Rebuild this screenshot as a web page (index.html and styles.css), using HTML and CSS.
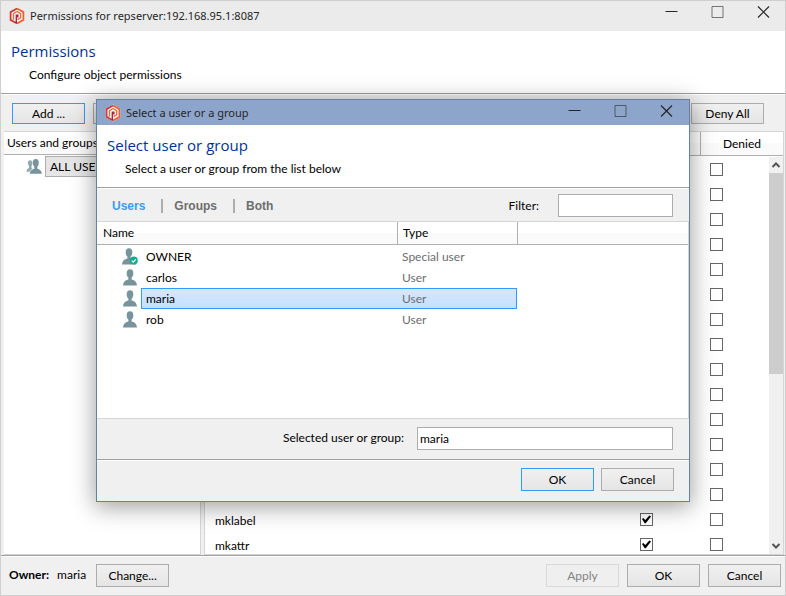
FILE: index.html
```html
<!DOCTYPE html>
<html lang="en">
<head>
<meta charset="utf-8">
<title>Permissions</title>
<meta name="viewport" content="width=device-width">
<link rel="stylesheet" href="styles.css">
</head>
<body>
<svg class="sprite" aria-hidden="true">
  <symbol id="logo" viewBox="0 0 16 18">
    <path d="M8 .6 15.300 4.600V13.400L8 17.400.7 13.400V4.600Z" fill="#fff"/>
    <path d="M8 1.500 14.400 5.100V12.900L8 16.500" fill="none" stroke="#f0602c" stroke-width="1.800"/>
    <path d="M8 1.500 1.600 5.100V12.900L8 16.500" fill="none" stroke="#cc3a3a" stroke-width="1.800"/>
    <path d="M4.500 12.800V6.600L8 4.500l3.600 2.100v4.200L8.600 12.600" fill="none" stroke="#ee6a3c" stroke-width="1.400"/>
    <path d="M7.300 16V8.200h1.600v1.700H7.300" fill="none" stroke="#a82440" stroke-width="1.400"/>
  </symbol>
  <symbol id="person" viewBox="0 0 16 17">
    <ellipse cx="8" cy="4.500" rx="3.300" ry="4.200"/>
    <path d="M6.400 7.500h3.200v3c3.500.8 5.100 2.400 5.400 6H1c.3-3.600 1.900-5.200 5.400-6z"/>
  </symbol>
  <symbol id="people" viewBox="0 0 17 17">
    <ellipse cx="4.400" cy="4.900" rx="2.400" ry="3" opacity=".8"/>
    <path d="M3.200 7h2.600v2.500l1 1-3.200 3.500H.600c.1-2.500 1-3.500 2.600-4z" opacity=".8"/>
    <ellipse cx="10.400" cy="4.600" rx="3.200" ry="4.200"/>
    <path d="M8.800 7.500h3.300v3.300c3.200.8 4.400 2.400 4.700 5.500H4c.3-3.100 1.700-4.700 4.800-5.500z"/>
  </symbol>
  <symbol id="min" viewBox="0 0 12 12"><path d="M0 5.500h12" stroke="currentColor"/></symbol>
  <symbol id="max" viewBox="0 0 12 12"><path d="M.5.5h11v11H.5z" fill="none" stroke="currentColor" opacity=".6"/></symbol>
  <symbol id="close" viewBox="0 0 12 12"><path d="M.5.5l11 11M11.500.500l-11 11" stroke="currentColor" stroke-width="1.200"/></symbol>
</svg>

<main class="window">
  <header class="titlebar">
    <svg class="logo"><use href="#logo"/></svg>
    <span class="caption">Permissions for repserver:192.168.95.1:8087</span>
    <div class="controls">
      <button aria-label="Minimize"><svg><use href="#min"/></svg></button>
      <button aria-label="Maximize"><svg><use href="#max"/></svg></button>
      <button aria-label="Close"><svg><use href="#close"/></svg></button>
    </div>
  </header>
  <section class="intro">
    <h1>Permissions</h1>
    <p>Configure object permissions</p>
  </section>
  <div class="toolbar">
    <button class="btn default">Add ...</button>
    <button class="btn" aria-label="Remove"></button>
    <button class="btn last">Deny All</button>
  </div>
  <div class="panels">
    <section class="panel">
      <h2 class="colhead">Users and groups</h2>
      <ul class="tree">
        <li><svg class="person"><use href="#people"/></svg><span>ALL USERS</span></li>
      </ul>
    </section>
    <section class="panel permissions">
      <table class="perm-table">
        <colgroup><col><col class="c-allowed"><col class="c-denied"></colgroup>
        <thead><tr><th></th><th></th><th>Denied</th></tr></thead>
        <tbody>
          <tr><td></td><td></td><td><input type="checkbox" aria-label="Denied"></td></tr>
          <tr><td></td><td></td><td><input type="checkbox" aria-label="Denied"></td></tr>
          <tr><td></td><td></td><td><input type="checkbox" aria-label="Denied"></td></tr>
          <tr><td></td><td></td><td><input type="checkbox" aria-label="Denied"></td></tr>
          <tr><td></td><td></td><td><input type="checkbox" aria-label="Denied"></td></tr>
          <tr><td></td><td></td><td><input type="checkbox" aria-label="Denied"></td></tr>
          <tr><td></td><td></td><td><input type="checkbox" aria-label="Denied"></td></tr>
          <tr><td></td><td></td><td><input type="checkbox" aria-label="Denied"></td></tr>
          <tr><td></td><td></td><td><input type="checkbox" aria-label="Denied"></td></tr>
          <tr><td></td><td></td><td><input type="checkbox" aria-label="Denied"></td></tr>
          <tr><td></td><td></td><td><input type="checkbox" aria-label="Denied"></td></tr>
          <tr><td></td><td></td><td><input type="checkbox" aria-label="Denied"></td></tr>
          <tr><td></td><td></td><td><input type="checkbox" aria-label="Denied"></td></tr>
          <tr><td>mktoplevelbranch</td><td></td><td><input type="checkbox" aria-label="Denied"></td></tr>
          <tr><td>mklabel</td><td><input type="checkbox" checked aria-label="Allow mklabel"></td><td><input type="checkbox" aria-label="Deny mklabel"></td></tr>
          <tr><td>mkattr</td><td><input type="checkbox" checked aria-label="Allow mkattr"></td><td><input type="checkbox" aria-label="Deny mkattr"></td></tr>
        </tbody>
      </table>
      <div class="scrollbar" aria-hidden="true">
        <svg viewBox="0 0 14 16"><path d="M3.500 10 7 6.500 10.500 10" /></svg>
        <div class="track"><div class="thumb"></div></div>
        <svg viewBox="0 0 14 16"><path d="M3.500 6 7 9.500 10.500 6" /></svg>
      </div>
    </section>
  </div>
  <footer class="footer">
    <strong>Owner:</strong><span class="owner">maria</span>
    <button class="btn tall">Change...</button>
    <button class="btn tall last" disabled>Apply</button>
    <button class="btn tall">OK</button>
    <button class="btn tall">Cancel</button>
  </footer>
</main>

<section class="dialog" role="dialog" aria-labelledby="dialog-title">
  <header class="titlebar">
    <svg class="logo"><use href="#logo"/></svg>
    <span class="caption">Select a user or a group</span>
    <div class="controls">
      <button aria-label="Minimize"><svg><use href="#min"/></svg></button>
      <button aria-label="Maximize"><svg><use href="#max"/></svg></button>
      <button aria-label="Close"><svg><use href="#close"/></svg></button>
    </div>
  </header>
  <section class="intro">
    <h1 id="dialog-title">Select user or group</h1>
    <p>Select a user or group from the list below</p>
  </section>
  <div class="filterbar">
    <nav class="tabs">
      <a href="#users" class="active">Users</a>
      <a href="#groups">Groups</a>
      <a href="#both">Both</a>
    </nav>
    <label for="filter">Filter:</label>
    <input class="field" type="text" id="filter">
  </div>
  <div class="listbox">
    <table class="user-table">
      <colgroup><col class="c-icon"><col class="c-name"><col class="c-type"><col></colgroup>
      <thead><tr><th colspan="2">Name</th><th>Type</th><th></th></tr></thead>
      <tbody>
        <tr>
          <td><svg class="person" viewBox="0 0 16 17"><use href="#person" x="-1" width="16" height="17"/><circle cx="11.800" cy="12.500" r="4" fill="#12b08a"/><path d="M9.800 12.600l1.500 1.500 2.600-2.800" fill="none" stroke="#fff" stroke-width="1.200"/></svg></td>
          <td>OWNER</td><td>Special user</td><td></td>
        </tr>
        <tr><td><svg class="person"><use href="#person"/></svg></td><td>carlos</td><td>User</td><td></td></tr>
        <tr class="selected"><td><svg class="person"><use href="#person"/></svg></td><td>maria</td><td>User</td><td></td></tr>
        <tr><td><svg class="person"><use href="#person"/></svg></td><td>rob</td><td>User</td><td></td></tr>
      </tbody>
    </table>
  </div>
  <div class="selection">
    <label for="selected">Selected user or group:</label>
    <input class="field" type="text" id="selected" value="maria">
  </div>
  <footer class="footer">
    <button class="btn tall default last">OK</button>
    <button class="btn tall">Cancel</button>
  </footer>
</section>
</body>
</html>
```
FILE: styles.css
```css
* { box-sizing: border-box; }
body {
  margin: 0;
  font: 12px/16px Lato, "Open Sans", sans-serif;
  color: #000;
  background: #f0f0f0;
}
h1, h2, p, ul { margin: 0; padding: 0; }
button, input { font: inherit; color: inherit; }
.sprite { position: absolute; width: 0; height: 0; }

.window {
  display: flex;
  flex-direction: column;
  height: 100vh;
  border: 1px solid #cfcfcf;
  background: #f0f0f0;
}

.titlebar {
  display: flex;
  flex: none;
  align-items: center;
  height: 30px;
  padding-left: 8px;
  background: #ebebeb;
  color: #262626;
}
.caption { font-family: "Noto Sans", sans-serif; font-size: 11px; }
.logo { width: 16px; height: 18px; margin-right: 5px; }
.controls { display: flex; gap: 33px; margin-left: auto; padding-right: 15px; }
.controls button { padding: 0; border: 0; background: none; }
.controls svg { display: block; width: 13px; height: 12px; }
.window > .titlebar .controls { padding-bottom: 8px; }

.intro {
  flex: none;
  padding: 9px 10px 8px;
  background: #fff;
  border-bottom: 1px solid #a0a0a0;
}
.intro h1 {
  font: 15px/22px "Open Sans", "Noto Sans", sans-serif;
  color: #003399;
}
.intro p { padding: 3px 0 0 18px; line-height: 20px; }

.toolbar {
  display: flex;
  flex: none;
  gap: 8px;
  padding: 8px 21px 7px 11px;
  border-top: 1px solid #fff;
}
.btn {
  width: 73px;
  height: 21px;
  padding: 0;
  border: 1px solid #acacac;
  background: linear-gradient(#f0f0f0, #e5e5e5);
  line-height: 19px;
}
.btn.tall { height: 23px; line-height: 21px; }
.btn.default { border-color: #3399ff; }
.btn.last { margin-left: auto; }
.btn:disabled { border-color: #d9d9d9; background: #efefef; color: #838383; }

.panels {
  display: flex;
  flex: 1;
  gap: 3px;
  min-height: 0;
  padding: 0 1px 0 3px;
}
.panel {
  flex: 0 0 197px;
  overflow: hidden;
  background: #fff;
  border: solid #d5d5d5;
  border-width: 1px 1px 1px 0;
}
.permissions { position: relative; flex: 1; border-left-width: 1px; }
.colhead, th {
  height: 23px;
  padding: 0 3px;
  border-bottom: 1px solid #b0b0b0;
  background: linear-gradient(#fff 50%, #fafafa 50%);
  font-size: 12px;
  line-height: 22px;
  font-weight: 400;
  text-align: left;
}
.tree { list-style: none; }
.tree li { display: flex; align-items: center; padding: 1px 0 0 22px; }
.tree span {
  margin-left: 3px;
  padding: 2px 4px;
  border: 1px solid #adadad;
  background: #e5e5e5;
  line-height: 15px;
}
.person { display: block; width: 16px; height: 17px; fill: #78939c; }

table { width: 100%; border-collapse: separate; border-spacing: 0; table-layout: fixed; }
td { padding: 0; white-space: nowrap; }
.c-allowed { width: 70px; }
.c-denied { width: 83px; }
.perm-table th { height: 24px; }
.perm-table th + th { border-left: 1px solid #b0b0b0; text-align: center; }
.perm-table td { height: 25px; padding: 2px 0 0 10px; }
.perm-table td:first-child { padding-top: 4px; }
input[type="checkbox"] {
  appearance: none;
  display: block;
  width: 13px;
  height: 13px;
  margin: 0;
  border: 1px solid #666;
  background: #fff;
}
input[type="checkbox"]:checked::after {
  content: "";
  display: block;
  width: 9px;
  height: 9px;
  margin: 1px;
  background: #000;
  clip-path: polygon(0 45%, 15% 32%, 36% 55%, 82% 5%, 100% 18%, 42% 92%, 30% 92%);
}
.scrollbar {
  position: absolute;
  top: 25px;
  right: 0;
  bottom: 0;
  display: flex;
  flex-direction: column;
  width: 14px;
  background: #f0f0f0;
}
.scrollbar svg { width: 14px; height: 16px; fill: none; stroke: #555; stroke-width: 2; }
.track { flex: 1; }
.thumb { height: 55%; background: #cdcdcd; }

.footer {
  display: flex;
  flex: none;
  align-items: center;
  gap: 8px;
  height: 40px;
  padding: 0 4px 1px 8px;
  border-top: 1px solid #a0a0a0;
  box-shadow: inset 0 1px #fff;
}
.owner { margin-right: 2px; }

.dialog {
  position: absolute;
  top: 99px;
  left: 96px;
  right: 96px;
  border: 1px solid #66809f;
  background: #f0f0f0;
  box-shadow: 0 4px 22px 1px rgba(0, 0, 0, 0.38);
}
.dialog .titlebar { height: 25px; background: #8da5cb; }
.dialog .controls { padding: 0 16px 4px 0; }
.filterbar {
  display: flex;
  align-items: center;
  height: 33px;
  padding: 1px 16px 0 15px;
  border-top: 1px solid #fff;
}
.tabs { display: flex; flex: 1; }
.tabs a {
  font: bold 12px/14px "Liberation Sans", Arial, sans-serif;
  color: #6d6d6d;
  text-decoration: none;
}
.tabs .active { color: #3d9af8; }
.tabs a + a { margin-left: 16px; padding-left: 11px; border-left: 2px solid #adadad; }
.field {
  width: 115px;
  height: 23px;
  margin-left: 19px;
  padding: 0 2px;
  border: 1px solid #abadb3;
  background: #fff;
  outline: 0;
}
.listbox {
  min-height: 198px;
  border: solid #d5d5d5;
  border-width: 1px 1px 1px 0;
  background: #fff;
}
.c-icon { width: 44px; }
.c-name { width: 256px; }
.c-type { width: 120px; }
.user-table th { padding-left: 6px; }
.user-table th + th { padding-left: 5px; border-left: 1px solid #b0b0b0; }
.user-table td { height: 21px; border: solid transparent; border-width: 1px 0; }
.user-table tbody tr:first-child td { height: 22px; padding-top: 1px; }
.user-table td:first-child { padding-left: 25px; }
.user-table td:nth-child(2) { padding-left: 4px; border-left-width: 1px; }
.user-table td:nth-child(3) { padding-left: 5px; color: #6d6d6d; border-right-width: 1px; }
.user-table .selected td:nth-child(2), .user-table .selected td:nth-child(3) {
  border-color: #3399ff;
  background: linear-gradient(#d5e8ff, #c4e0ff) border-box;
}
.user-table .selected td:nth-child(2) { border-right: 0; }
.user-table .selected td:nth-child(3) { border-left: 0; }
.selection {
  display: flex;
  align-items: center;
  justify-content: flex-end;
  height: 40px;
  padding: 0 16px 2px;
}
.selection .field { width: 256px; margin-left: 13px; }
.dialog .footer { gap: 7px; height: 42px; padding: 0 15px 2px; }
```
